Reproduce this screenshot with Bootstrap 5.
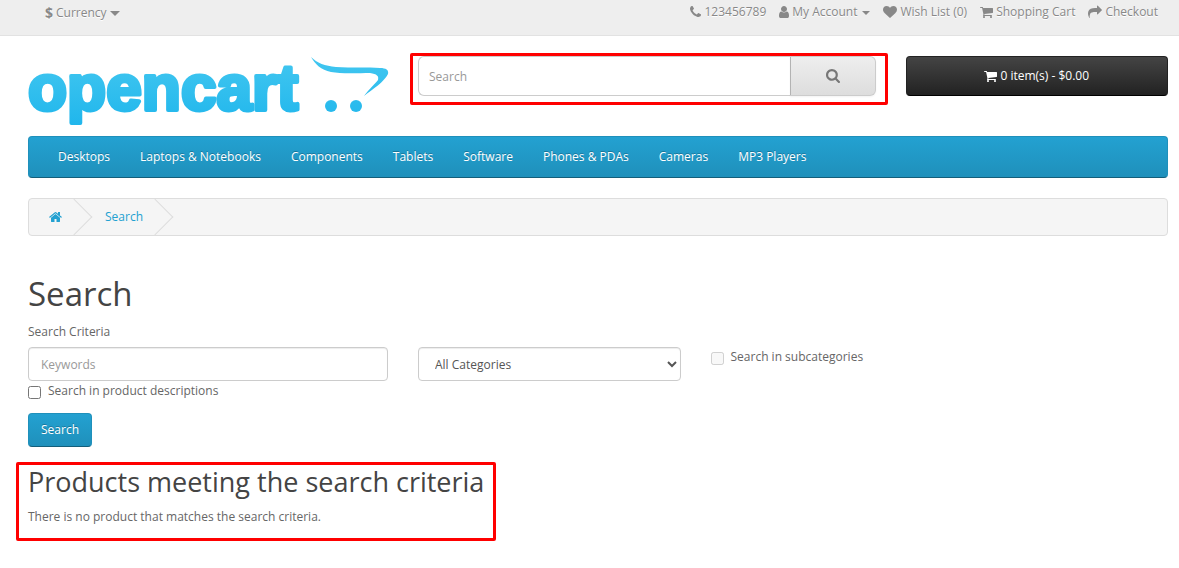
<!DOCTYPE html>
<html lang="en">
<head>
<meta charset="utf-8">
<meta name="viewport" content="width=device-width, initial-scale=1">
<title>Search</title>
<link href="https://cdn.jsdelivr.net/npm/bootstrap@5.3.0/dist/css/bootstrap.min.css" rel="stylesheet">
<style>
body { font: 400 12px/20px "Open Sans", sans-serif; color: #666; background: #fff; }
a { text-decoration: none; }
.page-wrap { padding-left: 28px; padding-right: 11px; }
.row { --bs-gutter-x: 30px; }
.fa-ico { height: 14px; fill: currentColor; flex: none; }
.caret-down { border: 4px solid transparent; border-top-color: currentColor; border-bottom: 0; }
.caret-big { border-width: 5px 5px 0; }

.top-bar { background: #eee; border-bottom: 1px solid #e2e2e2; height: 36px; padding: 2px 0 0; color: #888; text-shadow: 0 1px 0 #fff; }
.top-bar .currency-btn { color: #888; font-size: 12px; line-height: 20px; padding: 1px 0 0; margin-left: 17px; gap: 3px; text-shadow: 0 1px 0 #fff; }
.top-bar .currency-btn strong { font-size: 14px; line-height: 18px; }
.top-links { gap: 13px; padding-right: 10px; }
.top-links a { color: #888; display: flex; align-items: center; gap: 3px; }
.top-links .caret-down { margin-left: 2px; margin-top: 2px; }

.logo-link { display: block; }
.logo-link svg { display: block; width: 100%; max-width: 360px; height: auto; overflow: visible; }
.site-head { padding-top: 20px; margin-bottom: 8px; }
.highlight { position: absolute; border: 3px solid #f00; border-radius: 2px; pointer-events: none; z-index: 5; }
.highlight-search { inset: -3px -12px -9px -8px; }
.highlight-result { inset: 0 -12px 0 -12px; }
.search-box .form-control { height: 40px; font-size: 12px; line-height: 20px; padding: 0 10px; border: 1px solid #ccc; border-right: 0; border-radius: 6px 0 0 6px; }
.form-control::placeholder { color: #999; opacity: 1; }
.search-box .btn { height: 40px; width: 86px; border: 1px solid #ccc; border-left-color: #b3b3b3; border-radius: 0 6px 6px 0; background: linear-gradient(#eee, #ddd); color: #777; padding: 0; box-shadow: 0 1px 2px rgba(0,0,0,.05); }
.cart-btn { height: 40px; font-size: 12px; line-height: 18px; padding: 0; color: #fff; border: 1px solid; border-color: #222 #222 #000; border-radius: 4px; background: linear-gradient(#444, #222); display: flex; align-items: center; justify-content: center; gap: 3px; }
.cart-btn:hover { color: #fff; }

.main-menu { background: linear-gradient(#23a1d1, #1f90bb); border: 1px solid; border-color: #1f90bb #1f90bb #145e7a; border-radius: 4px; min-height: 42px; padding: 0 15px 0 14px; margin-bottom: 20px; }
.main-menu .nav-link { color: #fff; padding: 10px 15px; line-height: 20px; text-shadow: 0 -1px 0 rgba(0,0,0,.25); }

.crumbs { background: #f5f5f5; border: 1px solid #ddd; border-radius: 4px; height: 38px; overflow: hidden; font-size: 12px; line-height: 20px; margin-bottom: 40px; }
.crumbs li { position: relative; height: 36px; display: flex; align-items: center; padding: 0 12px 0 20px; }
.crumbs li + li { padding-left: 31px; }
.crumbs li::after { content: ""; position: absolute; top: 5px; right: -13px; width: 26px; height: 26px; border: solid #ddd; border-width: 1px 1px 0 0; transform: rotate(45deg); }
.crumbs a { color: #23a1d1; }

h1, h2 { color: #444; font-weight: 400; }
h1 { font-size: 33px; line-height: 36px; margin: 0 0 10px; }
h2 { font-size: 27px; line-height: 30px; margin: 0 0 10px; }
.field { height: 34px; font-size: 12px; line-height: 20px; padding: 6px 12px; border: 1px solid #ccc; border-radius: 4px; color: #555; box-shadow: inset 0 1px 1px rgba(0,0,0,.075); }
select.field { appearance: auto; background: #fff; }
.criteria-label { margin-bottom: 5px; }
.tick { display: inline-flex; align-items: center; gap: 7px; }
.tick input { width: 13px; height: 13px; margin: 2px 0 0; }
.blue-btn { height: 34px; font-size: 12px; line-height: 20px; padding: 6px 12px; color: #fff; border: 1px solid; border-color: #1f90bb #1f90bb #145e7a; border-radius: 4px; background: linear-gradient(#23a1d1, #1f90bb); text-shadow: 0 -1px 0 rgba(0,0,0,.25); }
.result-note { margin-top: 15px; padding: 5px 0 14px; }
</style>
</head>
<body>
<svg class="d-none" aria-hidden="true">
  <symbol id="i-phone" viewBox="192 0 1408 1792"><path d="M1600 1240q0 27-10 70.5t-21 68.5q-21 50-122 106-94 51-186 51-27 0-53-3.5t-57.5-12.5-47-14.5-55.5-20.5-49-18q-98-35-175-83-127-79-264-216t-216-264q-48-77-83-175-3-9-18-49t-20.5-55.5-14.5-47-12.5-57.5-3.5-53q0-92 51-186 56-101 106-122 25-11 68.5-21t70.5-10q14 0 21 3 18 6 53 76 11 19 30 54t35 63.5 31 53.5q3 4 17.5 25t21.5 35.5 7 28.5q0 20-28.5 50t-62 55-62 53-28.5 46q0 9 5 22.5t8.5 20.5 14 24 11.5 19q76 137 174 235t235 174q2 1 19 11.5t24 14 20.5 8.5 22.5 5q18 0 46-28.5t53-62 55-62 50-28.5q14 0 28.5 7t35.5 21.5 25 17.5q25 15 53.5 31t63.5 35 54 30q70 35 76 53 3 7 3 21z"/></symbol>
  <symbol id="i-user" viewBox="256 0 1280 1792"><path d="M1536 1399q0 109-62.5 187t-150.5 78h-854q-88 0-150.5-78t-62.5-187q0-85 8.5-160.5t31.5-152 58.5-131 94-89 134.5-34.5q131 128 313 128t313-128q76 0 134.5 34.5t94 89 58.5 131 31.5 152 8.5 160.5zm-256-887q0 159-112.5 271.5t-271.5 112.5-271.5-112.5-112.5-271.5 112.5-271.5 271.5-112.5 271.5 112.5 112.5 271.5z"/></symbol>
  <symbol id="i-heart" viewBox="0 0 1792 1792"><path d="M896 1664q-26 0-44-18l-624-602q-10-8-27.5-26t-55.5-65.5-68-97.5-53.5-121-23.5-138q0-220 127-344t351-124q62 0 126.5 21.5t120 58 95.5 68.5 76 68q36-36 76-68t95.5-68.5 120-58 126.5-21.5q224 0 351 124t127 344q0 221-229 450l-623 600q-18 18-44 18z"/></symbol>
  <symbol id="i-cart" viewBox="64 0 1664 1792"><path d="M704 1536q0 52-38 90t-90 38-90-38-38-90 38-90 90-38 90 38 38 90zm896 0q0 52-38 90t-90 38-90-38-38-90 38-90 90-38 90 38 38 90zm128-1088v512q0 24-16.5 42.5t-40.5 21.5l-1044 122q13 60 13 70 0 16-24 64h920q26 0 45 19t19 45-19 45-45 19h-1024q-26 0-45-19t-19-45q0-11 8-31.5t16-36 21.5-40 15.5-29.5l-177-823h-204q-26 0-45-19t-19-45 19-45 45-19h256q16 0 28.5 6.5t19.5 15.5 13 24.5 8 26 5.5 29.5 4.5 26h1201q26 0 45 19t19 45z"/></symbol>
  <symbol id="i-share" viewBox="0 0 1792 1792"><path d="M1792 640q0 26-19 45l-512 512q-19 19-45 19t-45-19-19-45v-256h-224q-98 0-175.5 6t-154 21.5-133 42.5-105.5 69.5-80 101-48.5 138.5-17.5 181q0 55 5 123 0 6 2.5 23.5t2.5 26.5q0 15-8.5 25t-23.5 10q-16 0-28-17-7-9-13-22t-13.5-30-10.5-24q-127-285-127-451 0-199 53-333 162-403 875-403h224v-256q0-26 19-45t45-19 45 19l512 512q19 19 19 45z"/></symbol>
  <symbol id="i-search" viewBox="64 128 1664 1664"><path d="M1216 832q0-185-131.5-316.5t-316.5-131.5-316.5 131.5-131.5 316.5 131.5 316.5 316.5 131.5 316.5-131.5 131.5-316.5zm512 832q0 52-38 90t-90 38q-54 0-90-38l-343-342q-179 124-399 124-143 0-273.5-55.5t-225-150-150-225-55.5-273.5 55.5-273.5 150-225 225-150 273.5-55.5 273.5 55.5 225 150 150 225 55.5 273.5q0 220-124 399l343 343q37 37 37 90z"/></symbol>
  <symbol id="i-home" viewBox="64 0 1664 1792"><path d="M1472 992v480q0 26-19 45t-45 19h-384v-384h-256v384h-384q-26 0-45-19t-19-45v-480q0-1 .5-3t.5-3l575-474 575 474q1 2 1 6zm223-69l-62 74q-8 9-21 11h-3q-13 0-21-7l-692-577-692 577q-12 8-24 7-13-2-21-11l-62-74q-8-10-7-23.5t11-21.5l719-599q32-26 76-26t76 26l244 204v-195q0-14 9-23t23-9h192q14 0 23 9t9 23v408l219 182q10 8 11 21.5t-7 23.5z"/></symbol>
</svg>

<nav class="top-bar">
  <div class="page-wrap d-flex justify-content-between align-items-start">
    <button type="button" class="btn border-0 currency-btn d-flex align-items-center"><strong>$</strong><span>Currency</span><i class="caret-down caret-big"></i></button>
    <div class="top-links d-flex">
      <a href="#"><svg class="fa-ico" width="11"><use href="#i-phone"/></svg>123456789</a>
      <a href="#"><svg class="fa-ico" width="10"><use href="#i-user"/></svg>My Account<i class="caret-down"></i></a>
      <a href="#"><svg class="fa-ico" width="14"><use href="#i-heart"/></svg>Wish List (0)</a>
      <a href="#"><svg class="fa-ico" width="13"><use href="#i-cart"/></svg>Shopping Cart</a>
      <a href="#"><svg class="fa-ico" width="14"><use href="#i-share"/></svg>Checkout</a>
    </div>
  </div>
</nav>

<div class="page-wrap">
  <header class="row site-head">
    <div class="col-4">
      <a class="logo-link" href="#" aria-label="opencart">
        <svg viewBox="0 0 360 72" width="360" height="72">
          <defs><linearGradient id="sky" gradientUnits="userSpaceOnUse" x1="0" y1="0" x2="0" y2="70"><stop offset="0" stop-color="#43c7f0"/><stop offset="1" stop-color="#20b6ec"/></linearGradient></defs>
          <g fill="url(#sky)">
            <text x="0" y="54" font-family="Liberation Sans, Arial, sans-serif" font-weight="700" font-size="64" stroke="url(#sky)" stroke-width="4" stroke-linejoin="round">opencart</text>
            <path d="M283 1C289 7 297 10 308 11C324 12 340 11 352 12C358 12 361 14 360 18C356 26 345 33 336 40C341 33 348 27 350 24C351 20 349 18 342 17C331 17 313 18 303 16C293 14 287 8 283 1Z"/>
            <circle cx="303" cy="50" r="6"/><circle cx="328" cy="50" r="6"/>
          </g>
        </svg>
      </a>
    </div>
    <div class="col-5">
      <div class="search-box position-relative d-flex">
        <input class="form-control flex-grow-1" type="text" placeholder="Search" aria-label="Search">
        <button class="btn flex-shrink-0 d-flex align-items-center justify-content-center" type="button" aria-label="Search"><svg class="fa-ico" width="14"><use href="#i-search"/></svg></button>
        <div class="highlight highlight-search"></div>
      </div>
    </div>
    <div class="col-3">
      <button type="button" class="btn cart-btn w-100"><svg class="fa-ico" width="13"><use href="#i-cart"/></svg>0 item(s) - $0.00</button>
    </div>
  </header>

  <nav class="main-menu">
    <div class="nav">
      <a class="nav-link" href="#">Desktops</a>
      <a class="nav-link" href="#">Laptops &amp; Notebooks</a>
      <a class="nav-link" href="#">Components</a>
      <a class="nav-link" href="#">Tablets</a>
      <a class="nav-link" href="#">Software</a>
      <a class="nav-link" href="#">Phones &amp; PDAs</a>
      <a class="nav-link" href="#">Cameras</a>
      <a class="nav-link" href="#">MP3 Players</a>
    </div>
  </nav>

  <ul class="crumbs list-unstyled d-flex">
    <li><a class="d-flex" href="#" aria-label="Home"><svg class="fa-ico" width="13"><use href="#i-home"/></svg></a></li>
    <li><a href="#">Search</a></li>
  </ul>

  <main>
    <h1>Search</h1>
    <label class="d-block criteria-label" for="keywords">Search Criteria</label>
    <div class="row">
      <div class="col-4"><input id="keywords" class="form-control field" type="text" placeholder="Keywords"></div>
      <div class="col-3">
        <select class="form-select field" aria-label="Category"><option>All Categories</option><option>Desktops</option><option>Components</option></select>
      </div>
      <div class="col-3"><label class="tick"><input type="checkbox" disabled>Search in subcategories</label></div>
    </div>
    <div class="mb-2"><label class="tick"><input type="checkbox">Search in product descriptions</label></div>
    <button type="button" class="btn blue-btn">Search</button>
    <div>
      <section class="result-note position-relative d-inline-block">
        <h2>Products meeting the search criteria</h2>
        <p class="m-0">There is no product that matches the search criteria.</p>
        <div class="highlight highlight-result"></div>
      </section>
    </div>
  </main>
</div>
<script src="https://cdn.jsdelivr.net/npm/bootstrap@5.3.0/dist/js/bootstrap.bundle.min.js"></script>
</body>
</html>
